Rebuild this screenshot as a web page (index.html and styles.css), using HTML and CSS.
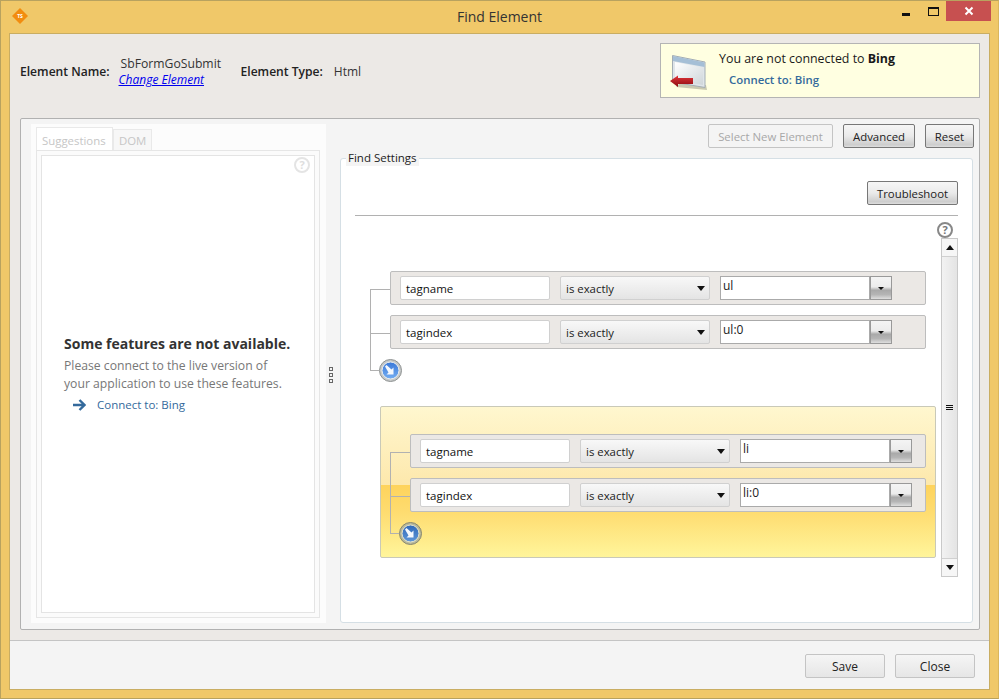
FILE: index.html
```html
<!DOCTYPE html>
<html lang="en">

<head>
    <meta charset="UTF-8">
    <title>Find Element</title>
    <link rel="stylesheet" href="styles.css">
</head>

<body>
    <div class="window">
        <div class="titlebar">
            <svg class="app-icon" width="16" height="16" viewBox="0 0 16 16">
                <path d="M8 0L16 8L8 16L0 8Z" fill="#f28c0f" />
                <text x="8" y="9.6" class="app-icon-text">TS</text>
            </svg>
            <div class="title">Find Element</div>
            <div class="win-buttons">
                <div class="win-min"></div>
                <div class="win-max"></div>
                <div class="win-close">
                    <svg width="10" height="10" viewBox="0 0 10 10">
                        <path d="M1.5 1.5L8.5 8.5M8.5 1.5L1.5 8.5" stroke="#fff" stroke-width="2" />
                    </svg>
                </div>
            </div>
        </div>

        <div class="client">
            <div class="header">
                <div class="element-info">
                    <span class="info-label">Element Name:</span>
                    <div class="name-stack">
                        <div class="name-value">SbFormGoSubmit</div>
                        <a class="change-link" href="#">Change Element</a>
                    </div>
                    <span class="info-label type-label">Element Type:</span>
                    <span class="type-value">Html</span>
                </div>
                <div class="connect-box">
                    <svg class="connect-icon" width="38" height="38" viewBox="0 0 38 38">
                        <defs>
                            <linearGradient id="pageFill" x1="0" y1="0" x2="1" y2="1">
                                <stop offset="0" stop-color="#ffffff" />
                                <stop offset="1" stop-color="#cfd6da" />
                            </linearGradient>
                            <linearGradient id="arrowFill" x1="0" y1="0" x2="0" y2="1">
                                <stop offset="0" stop-color="#e2363a" />
                                <stop offset="1" stop-color="#8a0b10" />
                            </linearGradient>
                        </defs>
                        <path d="M6 33L37 36L36 31L10 29Z" fill="#c9c9b0" />
                        <path d="M2.500 1.500L35 8L35 33.500L2.500 28Z" fill="#dfe5e9" stroke="#a3adb4" />
                        <path d="M3 2L34.500 8.500L34.500 13L3 7Z" fill="#a5bfd6" />
                        <path d="M5 8L33 13.500L33 31L5 26.500Z" fill="url(#pageFill)" />
                        <path d="M0 27L8 21.500L8 24L23 24L23 30L8 30L8 33Z" fill="url(#arrowFill)" />
                    </svg>
                    <div>
                        <div>You are not connected to <b>Bing</b></div>
                        <div class="connect-link">Connect to: Bing</div>
                    </div>
                </div>
            </div>

            <div class="main-panel">
                <div class="side">
                    <div class="tabs">
                        <div class="tab tab-active">Suggestions</div>
                        <div class="tab">DOM</div>
                    </div>
                    <div class="tab-body">
                        <div class="tab-inner">
                            <div class="help help-faded side-help">?</div>
                            <h2>Some features are not available.</h2>
                            <p>Please connect to the live version of your application to use these features.</p>
                            <div class="side-link">
                                <svg width="14" height="14" viewBox="0 0 14 14">
                                    <path d="M1 7H12M7.500 2L12.500 7L7.500 12" fill="none" stroke="#346a9c" stroke-width="2.400" />
                                </svg>
                                <span>Connect to: Bing</span>
                            </div>
                        </div>
                    </div>
                </div>

                <div class="splitter">
                    <div class="grip"></div>
                    <div class="grip"></div>
                    <div class="grip"></div>
                </div>

                <div class="settings">
                    <div class="toolbar">
                        <div class="btn btn-disabled select-btn">Select New Element</div>
                        <div class="btn btn-dark advanced-btn">Advanced</div>
                        <div class="btn btn-dark reset-btn">Reset</div>
                    </div>

                    <div class="group">
                        <div class="group-title">Find Settings</div>
                        <div class="group-top">
                            <div class="btn btn-dark trouble-btn">Troubleshoot</div>
                        </div>
                        <div class="help-row">
                            <div class="help">?</div>
                        </div>
                        <div class="rules-wrap">
                            <div class="rules">
                                <div class="tree">
                                    <div class="row">
                                        <div class="field">tagname</div>
                                        <div class="select">is exactly<i class="arrow"></i></div>
                                        <div class="combo">
                                            <div class="combo-input">ul</div>
                                            <div class="combo-btn"><i class="arrow-small"></i></div>
                                        </div>
                                    </div>
                                    <div class="row">
                                        <div class="field">tagindex</div>
                                        <div class="select">is exactly<i class="arrow"></i></div>
                                        <div class="combo">
                                            <div class="combo-input">ul:0</div>
                                            <div class="combo-btn"><i class="arrow-small"></i></div>
                                        </div>
                                    </div>
                                    <div class="add-btn">
                                        <svg width="23" height="23" viewBox="0 0 23 23">
                                            <defs>
                                                <linearGradient id="orbBlue" x1="0" y1="0" x2="0" y2="1">
                                                    <stop offset="0" stop-color="#3a78d8" />
                                                    <stop offset="1" stop-color="#74aef2" />
                                                </linearGradient>
                                            </defs>
                                            <circle cx="11.5" cy="11.5" r="11" fill="#c6c9c9" stroke="#8f9392" />
                                            <circle cx="11.5" cy="11.5" r="8.500" fill="url(#orbBlue)" stroke="#eef0f0" />
                                            <path d="M6 7.500L7.500 6L12.500 10.500L14.500 8.500V15.500H7.500L9.500 13.500Z" fill="#f4f8fd" />
                                        </svg>
                                    </div>
                                </div>

                                <div class="yellow-group">
                                    <div class="tree tree-nested">
                                        <div class="row">
                                            <div class="field">tagname</div>
                                            <div class="select">is exactly<i class="arrow"></i></div>
                                            <div class="combo">
                                                <div class="combo-input">li</div>
                                                <div class="combo-btn"><i class="arrow-small"></i></div>
                                            </div>
                                        </div>
                                        <div class="row">
                                            <div class="field">tagindex</div>
                                            <div class="select">is exactly<i class="arrow"></i></div>
                                            <div class="combo">
                                                <div class="combo-input">li:0</div>
                                                <div class="combo-btn"><i class="arrow-small"></i></div>
                                            </div>
                                        </div>
                                        <div class="add-btn">
                                            <svg width="23" height="23" viewBox="0 0 23 23">
                                                <defs>
                                                    <linearGradient id="orbDim" x1="0" y1="0" x2="0" y2="1">
                                                        <stop offset="0" stop-color="#2f68b8" />
                                                        <stop offset="1" stop-color="#5f97d8" />
                                                    </linearGradient>
                                                </defs>
                                                <circle cx="11.5" cy="11.5" r="11" fill="#b9b99a" stroke="#87876f" />
                                                <circle cx="11.5" cy="11.5" r="8.500" fill="url(#orbDim)" stroke="#e8e6cf" />
                                                <path d="M6 7.500L7.500 6L12.500 10.500L14.500 8.500V15.500H7.500L9.500 13.500Z" fill="#f4f8fd" />
                                            </svg>
                                        </div>
                                    </div>
                                </div>
                            </div>

                            <div class="scrollbar">
                                <div class="scroll-btn"><i class="scroll-up"></i></div>
                                <div class="scroll-thumb"><i class="thumb-lines"></i></div>
                                <div class="scroll-btn"><i class="scroll-down"></i></div>
                            </div>
                        </div>
                    </div>
                </div>
            </div>

            <div class="footer">
                <div class="btn btn-light">Save</div>
                <div class="btn btn-light">Close</div>
            </div>
        </div>
    </div>
</body>

</html>
```

FILE: styles.css
```css
/* Base */
html, body {
    margin: 0;
    padding: 0;
}

body {
    width: 1000px;
    height: 700px;
    overflow: hidden;
    background: #fff;
    font-family: "Open Sans", "Noto Sans", sans-serif;
    font-size: 12px;
    color: #1a1a1a;
}

.window {
    box-sizing: border-box;
    width: 999px;
    height: 699px;
    background: #f0c869;
    border: 1px solid #b8a25f;
    border-right-color: #d9b65f;
    display: flex;
    flex-direction: column;
}

/* Title bar */
.titlebar {
    height: 32px;
    flex: none;
    display: flex;
    align-items: center;
    position: relative;
    padding-left: 11px;
}

.app-icon {
    margin-top: -2px;
}

.app-icon-text {
    font-size: 5px;
    font-weight: bold;
    fill: #fff;
    text-anchor: middle;
}

.title {
    position: absolute;
    left: 0;
    right: 0;
    top: 6px;
    text-align: center;
    font-size: 14px;
    color: #333;
}

.win-buttons {
    margin-left: auto;
    margin-right: 7px;
    height: 32px;
    display: flex;
    align-items: flex-start;
}

.win-min {
    width: 8px;
    height: 3px;
    background: #111;
    margin: 12px 18px 0 0;
}

.win-max {
    box-sizing: border-box;
    width: 11px;
    height: 9px;
    border: 1px solid #111;
    border-top-width: 2px;
    margin: 6px 7px 0 0;
}

.win-close {
    width: 45px;
    height: 20px;
    background: #c75050;
    display: flex;
    justify-content: center;
    align-items: center;
}

.client {
    box-sizing: border-box;
    width: 981px;
    height: 657px;
    margin-left: 8px;
    background: #ece9e6;
    border: 1px solid #c9ad62;
    display: flex;
    flex-direction: column;
}

/* Element header */
.header {
    height: 84px;
    flex: none;
    display: flex;
    justify-content: space-between;
    padding: 9px 9px 0 10px;
    box-sizing: border-box;
}

.element-info {
    display: flex;
    align-items: flex-start;
    padding-top: 20px;
}

.info-label {
    font-weight: 600;
    font-size: 12.100px;
    color: #222;
}

.name-stack {
    margin: -8px 0 0 9px;
    width: 122px;
}

.name-value {
    line-height: 17px;
    padding-left: 2px;
    font-size: 12.200px;
    color: #333;
}

.change-link {
    display: block;
    color: #0000ee;
    font-style: italic;
    line-height: 16px;
}

.type-value {
    margin-left: 11px;
    color: #333;
}

.connect-box {
    box-sizing: border-box;
    width: 320px;
    height: 55px;
    background: #ffffe1;
    border: 1px solid #b4b4b4;
    display: flex;
    padding: 6px 0 0 9px;
    line-height: 18px;
    font-size: 12.400px;
}

.connect-icon {
    margin: 4px 11px 0 0;
}

.connect-link {
    color: #346a9c;
    font-weight: 600;
    font-size: 11.400px;
    margin: 3px 0 0 10px;
}

/* Main panel */
.main-panel {
    box-sizing: border-box;
    width: 960px;
    height: 512px;
    margin-left: 10px;
    background: #f4f4f4;
    border: 1px solid #b1b1b1;
    border-radius: 2px;
    display: flex;
    padding: 5px 5px 6px 10px;
}

.side {
    box-sizing: border-box;
    width: 295px;
    height: 499px;
    flex: none;
    background: #fcfcfc;
    padding: 3px 6px 5px 5px;
    display: flex;
    flex-direction: column;
}

.tabs {
    display: flex;
    height: 23px;
    flex: none;
    align-items: flex-end;
}

.tab {
    box-sizing: border-box;
    height: 21px;
    border: 1px solid #e9e9e9;
    border-bottom: 0;
    padding: 3px 5px 0 5px;
    color: #c6c6c6;
    background: #f7f7f7;
    font-size: 11.400px;
}

.tab-active {
    height: 23px;
    padding-top: 5px;
    background: #fff;
    width: 77px;
}

.tab-body {
    box-sizing: border-box;
    flex: 1;
    border: 1px solid #e6e6e6;
    background: #fbfbfb;
    padding: 4px;
}

.tab-inner {
    box-sizing: border-box;
    height: 100%;
    background: #fff;
    border: 1px solid #e4e4e4;
    position: relative;
    padding: 178px 20px 0 22px;
    color: #333;
}

.side-help {
    position: absolute;
    top: 1px;
    right: 4px;
}

.tab-inner h2 {
    margin: 0;
    font-size: 14px;
    line-height: 20px;
    font-weight: 700;
    color: #333;
}

.tab-inner p {
    margin: 3px 0 0;
    max-width: 222px;
    line-height: 18px;
    font-size: 12.200px;
    color: #777;
}

.side-link {
    display: flex;
    align-items: center;
    gap: 11px;
    margin: 4px 0 0 8px;
    color: #346a9c;
    font-size: 11.500px;
}

.splitter {
    width: 8px;
    flex: none;
    margin: 2px 5px 0 0;
    display: flex;
    flex-direction: column;
    justify-content: center;
    align-items: center;
    gap: 2px;
    padding-left: 1px;
}

.grip {
    box-sizing: border-box;
    width: 4px;
    height: 4px;
    border: 1px solid #666;
}

.settings {
    flex: 1;
    display: flex;
    flex-direction: column;
    min-width: 0;
}

/* Buttons */
.toolbar {
    display: flex;
    justify-content: flex-end;
    gap: 10px;
    height: 34px;
    flex: none;
}

.btn {
    box-sizing: border-box;
    height: 24px;
    border: 1px solid #777;
    border-radius: 2px;
    display: flex;
    justify-content: center;
    align-items: center;
    background: linear-gradient(#f6f6f6 0%, #eaeaea 50%, #cdcdcd 90%, #dedede 100%);
    color: #222;
    font-size: 11.400px;
}

.btn-disabled {
    border-color: #c4c4c4;
    color: #a8a8a8;
    background: #f4f4f4;
}

.select-btn { width: 125px; }
.advanced-btn { width: 72px; }
.reset-btn { width: 49px; }
.trouble-btn { width: 91px; }

.btn-light {
    width: 80px;
    border-color: #c4c4c4;
    background: linear-gradient(#f5f5f5, #e6e6e6);
    font-size: 12px;
}

/* Find settings group */
.group {
    box-sizing: border-box;
    position: relative;
    width: 633px;
    height: 465px;
    background: #fff;
    border: 1px solid #d5dfe5;
    border-radius: 3px;
}

.group-title {
    position: absolute;
    left: 5px;
    top: -9px;
    background: #f4f4f4;
    padding: 0 2px;
    line-height: 16px;
    color: #222;
    font-size: 11.500px;
}

.group-top {
    box-sizing: border-box;
    height: 57px;
    margin: 0 14px;
    padding-top: 22px;
    display: flex;
    justify-content: flex-end;
    border-bottom: 1px solid #b1b1b1;
}

.help-row {
    display: flex;
    justify-content: flex-end;
    padding: 6px 19px 0 0;
    height: 16px;
}

.help {
    box-sizing: border-box;
    width: 16px;
    height: 16px;
    border: 2px solid #888;
    border-radius: 50%;
    font-size: 11px;
    font-weight: 700;
    line-height: 12px;
    text-align: center;
    color: #777;
    background: #fff;
}

.help-faded {
    border-color: #e4e4e4;
    color: #dedede;
}

.rules-wrap {
    display: flex;
    padding-left: 29px;
}

.rules {
    width: 572px;
    padding-top: 33px;
}

/* Condition rows */
.tree {
    position: relative;
    padding-left: 20px;
    padding-bottom: 23px;
}

.tree::before {
    content: "";
    position: absolute;
    left: 0;
    top: 18px;
    bottom: 11px;
    width: 1px;
    background: #b1b1b1;
}

.row {
    box-sizing: border-box;
    position: relative;
    width: 536px;
    height: 34px;
    margin-bottom: 10px;
    background: #ebe8e5;
    border: 1px solid #bdbdbd;
    border-radius: 2px;
    display: flex;
    align-items: flex-start;
    padding: 4px 0 0 9px;
}

.tree-nested .row {
    width: 516px;
}

.row::before {
    content: "";
    position: absolute;
    left: -21px;
    top: 17px;
    width: 20px;
    height: 1px;
    background: #b1b1b1;
}

.field {
    box-sizing: border-box;
    width: 150px;
    height: 24px;
    background: #fff;
    border: 1px solid #d0d0d0;
    border-radius: 2px;
    padding-left: 5px;
    line-height: 23px;
    font-size: 11.500px;
    color: #111;
}

.select {
    box-sizing: border-box;
    width: 150px;
    height: 24px;
    margin-left: 10px;
    background: linear-gradient(#f8f8f8, #e4e4e4);
    border: 1px solid #d0d0d0;
    border-radius: 2px;
    padding-left: 5px;
    font-size: 11.400px;
    display: flex;
    justify-content: space-between;
    align-items: center;
    color: #222;
}

.arrow {
    width: 0;
    height: 0;
    border: 4px solid transparent;
    border-top: 5px solid #111;
    border-bottom: 0;
    margin-right: 4px;
}

.combo {
    margin-left: 10px;
    display: flex;
}

.combo-input {
    box-sizing: border-box;
    width: 150px;
    height: 24px;
    background: #fff;
    border: 1px solid #aaa;
    padding-left: 2px;
    line-height: 18px;
    color: #222;
}

.combo-btn {
    box-sizing: border-box;
    width: 22px;
    height: 24px;
    border: 1px solid #999;
    background: linear-gradient(#f4f4f4 0%, #ececec 45%, #a9a9a9 60%, #b5b5b5 80%, #dedede 100%);
    display: flex;
    justify-content: center;
    align-items: center;
}

.arrow-small {
    width: 0;
    height: 0;
    border: 3px solid transparent;
    border-top: 3px solid #111;
    border-bottom: 0;
}

.add-btn {
    position: absolute;
    left: 0;
    bottom: 0;
    display: flex;
    line-height: 0;
    padding-left: 9px;
}

.add-btn::before {
    content: "";
    position: absolute;
    left: 0;
    top: 11px;
    width: 9px;
    height: 1px;
    background: #b1b1b1;
}

.yellow-group {
    box-sizing: border-box;
    width: 556px;
    height: 152px;
    margin: 24px 0 0 10px;
    padding: 27px 0 0 9px;
    border: 1px solid #c9c9b8;
    border-radius: 2px;
    background: linear-gradient(#fff7cf 0%, #fde8ac 52%, #fed35c 52%, #fedc70 70%, #fff59b 100%);
}

/* Scrollbar */
.scrollbar {
    box-sizing: border-box;
    width: 17px;
    height: 339px;
    margin-left: -1px;
    border: 1px solid #c9c9c9;
    background: #f4f4f4;
    display: flex;
    flex-direction: column;
}

.scroll-btn {
    height: 17px;
    flex: none;
    background: #f6f6f6;
    display: flex;
    justify-content: center;
    align-items: center;
}

.scroll-up {
    width: 0;
    height: 0;
    border: 4px solid transparent;
    border-bottom: 5px solid #111;
    border-top: 0;
}

.scroll-down {
    width: 0;
    height: 0;
    border: 4px solid transparent;
    border-top: 5px solid #111;
    border-bottom: 0;
}

.scroll-thumb {
    flex: 1;
    border: 1px solid #d0d0d0;
    border-width: 1px 0;
    background: linear-gradient(90deg, #f2f2f2, #e4e4e4);
    display: flex;
    justify-content: center;
    align-items: center;
}

.thumb-lines {
    width: 7px;
    height: 3px;
    border-top: 1px solid #111;
    border-bottom: 1px solid #111;
    position: relative;
}

.thumb-lines::before {
    content: "";
    position: absolute;
    left: 0;
    right: 0;
    top: 1px;
    height: 1px;
    background: #111;
}

/* Footer */
.footer {
    flex: 1;
    margin-top: 10px;
    background: #f4f4f4;
    border-top: 1px solid #c4c4c4;
    display: flex;
    justify-content: flex-end;
    align-items: flex-start;
    gap: 10px;
    padding: 13px 14px 0 0;
}
```
